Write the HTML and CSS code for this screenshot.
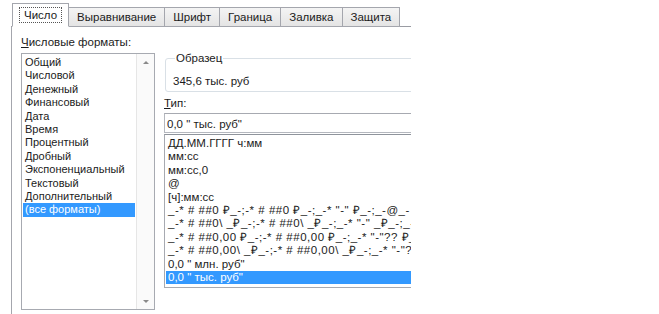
FILE: index.html
```html
<!DOCTYPE html>
<html lang="ru">
<head>
	<meta charset="UTF-8">
	<title>Формат ячеек</title>
	<link rel="stylesheet" href="styles.css">
</head>
<body>
<div class="dialog">
	<div class="tabs">
		<div class="tab active"><span class="focus">Число</span></div>
		<div class="tab">Выравнивание</div>
		<div class="tab">Шрифт</div>
		<div class="tab">Граница</div>
		<div class="tab">Заливка</div>
		<div class="tab">Защита</div>
	</div>
	<div class="panel">
		<div class="left">
			<div class="label"><u>Ч</u>исловые форматы:</div>
			<div class="listbox cats">
				<ul class="items">
					<li>Общий</li>
					<li>Числовой</li>
					<li>Денежный</li>
					<li>Финансовый</li>
					<li>Дата</li>
					<li>Время</li>
					<li>Процентный</li>
					<li>Дробный</li>
					<li>Экспоненциальный</li>
					<li>Текстовый</li>
					<li>Дополнительный</li>
					<li class="sel">(все форматы)</li>
				</ul>
				<div class="scroll">
					<span class="arr up"></span>
					<span class="arr down"></span>
				</div>
			</div>
		</div>
		<div class="right">
			<fieldset class="sample">
				<legend>Образец</legend>
				<div class="value">345,6 тыс. руб</div>
			</fieldset>
			<div class="label"><u>Т</u>ип:</div>
			<div class="input">0,0 " тыс. руб"</div>
			<div class="listbox codes">
				<ul class="items">
					<li>ДД.ММ.ГГГГ ч:мм</li>
					<li>мм:сс</li>
					<li>мм:сс,0</li>
					<li>@</li>
					<li>[ч]:мм:сс</li>
					<li class="code">_-* # ##0 ₽_-;-* # ##0 ₽_-;_-* "-" ₽_-;_-@_-</li>
					<li class="code">_-* # ##0\ _₽_-;-* # ##0\ _₽_-;_-* "-" _₽_-;_-@_-</li>
					<li class="code">_-* # ##0,00 ₽_-;-* # ##0,00 ₽_-;_-* "-"?? ₽_-;_-@_-</li>
					<li class="code">_-* # ##0,00\ _₽_-;-* # ##0,00\ _₽_-;_-* "-"?? _₽_-;_-@_-</li>
					<li>0,0 " млн. руб"</li>
					<li class="sel">0,0 " тыс. руб"</li>
				</ul>
			</div>
		</div>
	</div>
</div>
</body>
</html>
```

FILE: styles.css
```css
* {
	margin: 0;
	padding: 0;
	box-sizing: border-box;
}
body {
	background: #fff;
	padding-left: 11px;
	font-family: "Liberation Sans", Arial, sans-serif;
	font-size: 11.5px;
	color: #1b1b1b;
}
.dialog {
	width: 400px;
	height: 314px;
	overflow: hidden;
}
.tabs {
	display: flex;
	align-items: flex-end;
	height: 27px;
	padding-left: 1px;
	border-bottom: 1px solid #9a9ca3;
}
.tab {
	height: 20px;
	margin-bottom: -1px;
	padding: 0 8px;
	line-height: 18px;
	background: linear-gradient(#f4f4f4, #e4e4e4);
	border: 1px solid #a4a6ad;
	border-left: none;
	white-space: nowrap;
}
.tab.active {
	height: 24px;
	padding: 0 7px;
	background: #fff;
	border-left: 1px solid #a4a6ad;
	border-bottom-color: #fff;
	line-height: 20px;
}
.focus {
	display: inline-block;
	padding: 0 4px;
	line-height: 14px;
	outline: 1px dotted #555;
	margin-top: 4px;
	vertical-align: top;
}
.panel {
	display: flex;
	gap: 9px;
	height: 287px;
	padding: 9px 0 0 9px;
	border-left: 1px solid #a4a6ad;
}
.label {
	line-height: 13px;
	white-space: nowrap;
}
.listbox {
	border: 1px solid #a7aab1;
	background: #fff;
	display: flex;
}
.items {
	list-style: none;
	flex: 1;
	padding: 2px 1px 0;
}
.items li {
	line-height: 13.4px;
	padding-left: 2px;
	white-space: nowrap;
	overflow: hidden;
}
.items li.sel {
	background: #3399ff;
	color: #fff;
}
.items li.code {
	letter-spacing: 0.5px;
}
.cats {
	width: 134px;
	height: 257px;
	margin-top: 4px;
}
.cats .items li {
	font-size: 11px;
}
.scroll {
	width: 18px;
	border-left: 1px solid #e6e6e6;
	background: #fafafa;
	display: flex;
	flex-direction: column;
	justify-content: space-between;
	align-items: center;
	padding: 7px 0 6px;
}
.arr {
	width: 0;
	height: 0;
	border-left: 3px solid transparent;
	border-right: 3px solid transparent;
}
.arr.up {
	border-bottom: 3px solid #8a8a8a;
}
.arr.down {
	border-top: 3px solid #8a8a8a;
}
.right {
	width: 300px;
	padding-top: 16px;
}
.sample {
	border: 1px solid #d9e0e6;
	border-radius: 3px;
	padding: 0 0 3px 6px;
	margin-left: 1px;
}
.sample legend {
	padding: 0 1px;
	line-height: 13px;
	margin-left: 3px;
}
.value {
	line-height: 13px;
	padding-top: 10px;
	padding-left: 1px;
}
.right .label {
	margin-top: 5px;
}
.input {
	margin-top: 3px;
	height: 20px;
	border: 1px solid #b5b8bf;
	border-top-color: #a7aab1;
	line-height: 18px;
	padding: 1px 0 0 2px;
	white-space: nowrap;
}
.codes {
	margin-top: 1px;
	height: 154px;
	border-top-color: #8f949c;
}
```
